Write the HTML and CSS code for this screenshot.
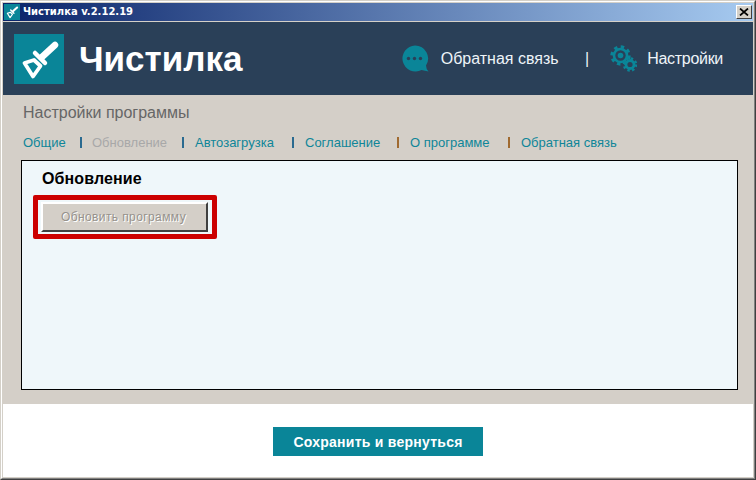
FILE: index.html
```html
<!DOCTYPE html>
<html lang="ru">
<head>
<meta charset="utf-8">
<title>Чистилка</title>
<link rel="stylesheet" href="styles.css">
</head>
<body>
<div class="frame-outer"><div class="frame-mid"><div class="window">
  <div class="titlebar">
    <svg class="title-icon" viewBox="0 0 50 50"><rect width="50" height="50" fill="#0a8598"/><use href="#brush"/></svg>
    <span class="title-text">Чистилка v.2.12.19</span>
    <span class="close"><svg viewBox="0 0 10 8" class="close-x"><path d="M1 0.5 L9 7.5 M9 0.5 L1 7.5" stroke="#000" stroke-width="1.7" fill="none"/></svg></span>
  </div>
  <header class="header">
    <div class="logo">
      <svg class="logo-svg" viewBox="0 0 50 50">
        <g id="brush" fill="none" stroke="#fff" stroke-linejoin="round">
          <path d="M41 11 L28 23" stroke-width="6.5" stroke-linecap="round"/>
          <path d="M21 19 L31 29" stroke-width="4.5" stroke-linecap="round"/>
          <path d="M20 26 L10.500 29 L19 42.500 L26.500 32 Z" stroke-width="3.800"/>
        </g>
      </svg>
    </div>
    <div class="brand">Чистилка</div>
    <nav class="top-nav">
      <svg class="icon-chat" viewBox="0 0 28 27">
        <path d="M14 0.500 A13 13 0 1 0 20.500 25 L27.500 26.500 Q25 23.500 25 20.500 A13 13 0 0 0 14 0.500 Z" fill="#0a8598"/>
        <circle cx="7.500" cy="13.500" r="1.700" fill="#2a4058"/><circle cx="13.500" cy="13.500" r="1.700" fill="#2a4058"/><circle cx="19.500" cy="13.500" r="1.700" fill="#2a4058"/>
      </svg>
      <span class="top-link top-link-feedback">Обратная связь</span>
      <span class="top-sep">|</span>
      <svg class="icon-gear" viewBox="0 0 27 27">
        <g fill="none" stroke="#0a8598">
          <circle cx="10.500" cy="10.500" r="8.600" stroke-width="3.200" stroke-dasharray="3.400 3.350"/>
          <circle cx="10.500" cy="10.500" r="6.500" stroke-width="2.600"/>
          <circle cx="20" cy="19.500" r="6" stroke-width="2.600" stroke-dasharray="2.400 2.310"/>
          <circle cx="20" cy="19.500" r="4" stroke-width="2.800"/>
        </g>
        <circle cx="10.500" cy="10.500" r="2.800" fill="#0a8598"/>
      </svg>
      <span class="top-link top-link-settings">Настройки</span>
    </nav>
  </header>
  <main class="content">
    <h1 class="page-title">Настройки программы</h1>
    <div class="tabs">
      <a class="tab tab-w1">Общие</a><i class="sep sep-blue sep-tight"></i>
      <a class="tab tab-off tab-w2">Обновление</a><i class="sep sep-blue"></i>
      <a class="tab tab-w3">Автозагрузка</a><i class="sep sep-blue"></i>
      <a class="tab tab-w4">Соглашение</a><i class="sep sep-brown"></i>
      <a class="tab tab-w5">О программе</a><i class="sep sep-brown"></i>
      <a class="tab tab-w6">Обратная связь</a>
    </div>
    <section class="panel">
      <h2 class="panel-title">Обновление</h2>
      <div class="highlight-wrap">
        <button class="update-btn" disabled>Обновить программу</button>
        <div class="highlight"></div>
      </div>
    </section>
  </main>
  <footer class="footer">
    <button class="save-btn">Сохранить и вернуться</button>
  </footer>
</div></div></div>
</body>
</html>
```
FILE: styles.css
```css
* { box-sizing: border-box; }
html, body { margin: 0; padding: 0; width: 756px; height: 480px; overflow: hidden; font-family: "Liberation Sans", Arial, sans-serif; }
.frame-outer { width: 756px; height: 480px; border: 1px solid; border-color: #d4d0c8 #404040 #404040 #d4d0c8; }
.frame-mid { width: 100%; height: 100%; border: 1px solid; border-color: #fff #808080 #808080 #fff; }
.window { width: 100%; height: 100%; border: 1px solid #d4d0c8; display: flex; flex-direction: column; }

.titlebar { height: 19px; flex: none; display: flex; align-items: center; padding: 0 1px 1px 1px; background: linear-gradient(90deg, #0a246a, #a6caf0); border-bottom: 1px solid #d4d0c8; }
.title-icon { width: 16px; height: 16px; flex: none; }
.title-text { margin-left: 3px; font: bold 10px "DejaVu Sans", sans-serif; color: #fff; white-space: nowrap; }
.close { margin-left: auto; width: 16px; height: 14px; background: #d4d0c8; display: flex; align-items: center; justify-content: center; border: 1px solid; border-color: #fff #404040 #404040 #fff; }
.close-x { width: 10px; height: 8px; }

.header { height: 73px; flex: none; background: #2a4058; display: flex; align-items: center; padding: 0 30px 0 11px; }
.logo { width: 50px; height: 50px; flex: none; background: #0a8598; }
.logo-svg { display: block; width: 50px; height: 50px; }
.brand { margin-left: 15px; font-size: 35px; font-weight: bold; color: #fff; }
.top-nav { margin-left: auto; display: flex; align-items: center; color: #eef4f8; font-size: 16px; }
.icon-chat { width: 28px; height: 27px; flex: none; }
.icon-gear { width: 27px; height: 27px; flex: none; margin-left: 21px; }
.top-link { margin-left: 10px; }
.top-link-feedback { margin-left: 12px; }
.top-link-settings { letter-spacing: -.3px; }
.top-sep { margin-left: 26.5px; color: #eef4f8; }

.content { flex: 1; min-height: 0; background: #d4cfc8; padding: 9px 15px 14px 18px; display: flex; flex-direction: column; }
.page-title { margin: 0 0 0 2px; font-size: 16px; line-height: 18px; font-weight: normal; color: #666; }
.tabs { margin: 12px 0 0 2px; height: 16px; display: flex; align-items: center; font-size: 13px; }
.tab { color: #0f8699; white-space: nowrap; }
.tab-off { color: #a8a8a8; }
.tab-w1 { width: 57px; }
.tab-w2 { width: 90px; }
.tab-w3 { width: 97px; }
.tab-w4 { width: 92px; }
.tab-w5 { width: 98px; }
.sep { width: 2px; height: 11px; flex: none; margin-right: 11px; }
.sep-tight { margin-right: 10px; }
.sep-blue { background: #2a6a90; }
.sep-brown { background: #a06a30; }

.panel { flex: 1; margin-top: 10px; border: 1px solid #000; background: #eff7fa; padding: 9px 0 0 19px; }
.panel-title { margin: 0 0 0 1px; font-size: 16px; line-height: 18px; font-weight: bold; letter-spacing: .1px; color: #000; }
.highlight-wrap { position: relative; margin-top: 14px; width: 167px; }
.update-btn { display: block; width: 167px; height: 30px; padding: 0 2px 0 0; background: #d4cfc8; border: 2px solid; border-color: #fff #404040 #404040 #fff; font: 12px "Liberation Sans", sans-serif; letter-spacing: .4px; color: #96928c; text-shadow: 1px 1px 0 #fff; }
.highlight { position: absolute; left: -8px; top: -7px; width: 184px; height: 44px; border: 5px solid #cc0000; border-radius: 2px; }

.footer { height: 73px; flex: none; background: #fff; display: flex; justify-content: center; align-items: flex-start; padding-top: 23px; }
.save-btn { width: 210px; height: 29px; border: 0; padding: 0; background: #0a8598; color: #fff; font: bold 14px "Liberation Sans", sans-serif; letter-spacing: .25px; }
```
